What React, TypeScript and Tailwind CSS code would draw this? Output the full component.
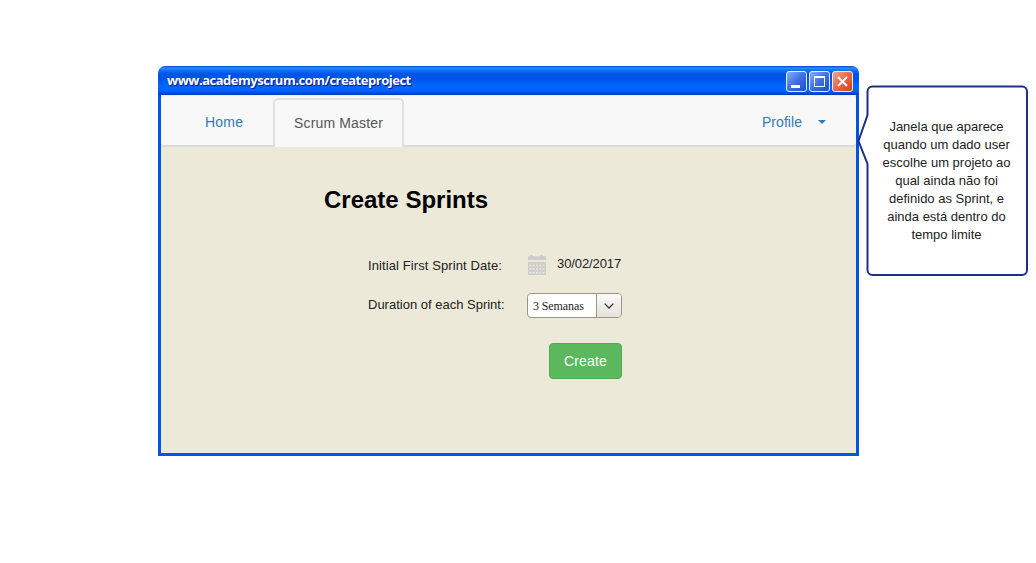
import React from "react";

function TitleButton({ kind }: { kind: "min" | "max" | "close" }) {
  const close = kind === "close";
  return (
    <button aria-label={kind} className="h-[21px] w-[21px]">
      <svg width="21" height="21" viewBox="0 0 21 21" className="block">
        <defs>
          <linearGradient id={`fill-${kind}`} x1="0" y1="0" x2="1" y2="1">
            <stop offset="0" stopColor={close ? "#f3a58f" : "#8fb0f8"} />
            <stop offset="0.5" stopColor={close ? "#e5694a" : "#3f6fe4"} />
            <stop offset="1" stopColor={close ? "#d63d10" : "#1b4dd0"} />
          </linearGradient>
        </defs>
        <rect x="0.5" y="0.5" width="20" height="20" rx="2.5" fill={`url(#fill-${kind})`} stroke="#e3ebff" />
        {kind === "min" && <rect x="5" y="14" width="9" height="3" fill="#fff" />}
        {kind === "max" && (
          <path fill="#fff" fillRule="evenodd" d="M5 5h11v11H5zM6 7v8h9V7z" />
        )}
        {close && <path d="M6 6l9 9M15 6l-9 9" stroke="#fff" strokeWidth="2" />}
      </svg>
    </button>
  );
}

function CalendarIcon() {
  return (
    <svg width="20" height="21" viewBox="0 0 20 21" className="block">
      <path fill="#ccc" d="M1 3q0-.8.800-.800H3Q3 .800 4.500.800T6 2.200h7Q13 .800 14.500.800T16 2.200h2.200q.800 0 .800.800V6H1z" />
      <path fill="#ccc" d="M1 8h18v12q0 1-1 1H2q-1 0-1-1z" />
      <g fill="#ece9d8">
        {[10.700, 14.200, 17.800].map((y) =>
          [2.400, 5.700, 9.000, 12.300, 15.600].map((x) => (
            <rect key={`${x}-${y}`} x={x} y={y} width="1.900" height="1.700" />
          ))
        )}
      </g>
    </svg>
  );
}

function Window() {
  return (
    <section className="mt-[66px] ml-[158px] flex h-[390px] w-[701px] shrink-0 flex-col">
      <header className="flex h-[29px] shrink-0 items-center rounded-t-[7px] bg-[linear-gradient(to_bottom,#0543c4_0px,#2f8bff_2px,#1672fa_4px,#0054e3_8px,#0055e8_13px,#0066ff_20px,#0066ff_24px,#0050dc_27px,#0038b4_29px)] pr-[6px] pl-[9px]">
        <h1 className="-mt-[2px] w-[260px] font-['Open_Sans','Noto_Sans',sans-serif] text-[13px] leading-[20px] font-bold tracking-[-0.48px] whitespace-nowrap text-white [text-shadow:1px_1px_1px_#0f1089]">
          www.academyscrum.com/createproject
        </h1>
        <div className="mt-[2px] ml-auto flex gap-[2px]">
          <TitleButton kind="min" />
          <TitleButton kind="max" />
          <TitleButton kind="close" />
        </div>
      </header>
      <div className="flex grow flex-col border-x-[3px] border-b-[3px] border-[#0055e5] bg-[#ece9d8]">
        <nav className="flex h-[52px] shrink-0 rounded border-t border-b-2 border-t-[#efefef] border-b-[#dadada] bg-[#f8f8f8] text-[14px] leading-[20px] text-[#337ab7]">
          <a className="mt-[16px] ml-[44px] w-[68px] tracking-[0.2px]">Home</a>
          <div className="mt-[2px] h-[49px] w-[131px] rounded-t-[5px] border-2 border-b-0 border-[#e0e0e0] bg-[#f8f8f8] pt-[13px] text-center tracking-[0.15px] text-[#555]">
            Scrum Master
          </div>
          <a className="mt-[16px] ml-auto flex pr-[30px]">
            <span className="tracking-[0.05px]">Profile</span>
            <svg width="8" height="4" viewBox="0 0 8 4" className="mt-[8px] ml-[16px]">
              <path d="M0 0h8L4 4z" fill="#337ab7" />
            </svg>
          </a>
        </nav>
        <main className="pl-[163px] text-[13px] leading-[20px] text-[#222]">
          <h2 className="mt-[38px] text-[24px] leading-[30px] font-bold text-black">Create Sprints</h2>
          <div className="mt-[37px] ml-[44px] grid w-[254px] grid-cols-[159px_95px]">
            <label className="mt-[4px] tracking-[0.1px] whitespace-nowrap">Initial First Sprint Date:</label>
            <div className="flex h-[41px]">
              <div className="mt-[2px]"><CalendarIcon /></div>
              <span className="mt-[2px] ml-[10px] tracking-[-0.1px]">30/02/2017</span>
            </div>
            <label className="mt-[2px] whitespace-nowrap">Duration of each Sprint:</label>
            <div className="flex h-[25px] w-[95px] overflow-hidden rounded-[4px] border border-[#9d9485] bg-white">
              <span className="w-[68px] pl-[5px] pt-[2px] font-['Liberation_Serif',serif] text-[12px] tracking-[-0.1px] text-[#222]">3 Semanas</span>
              <div className="flex grow items-center justify-center border-l border-[#9d9485] bg-linear-to-b from-[#fbfbfa] to-[#e5e1da]">
                <svg width="10" height="6" viewBox="0 0 10 6">
                  <path d="M.7.600L5 5l4.300-4.400" fill="none" stroke="#333" strokeWidth="1.300" />
                </svg>
              </div>
            </div>
            <button className="col-start-2 mt-[25px] h-[36px] w-[73px] justify-self-end rounded-[4px] border border-[#4cae4c] bg-[#5cb85c] text-[14px] tracking-[0.15px] text-white">
              Create
            </button>
          </div>
        </main>
      </div>
    </section>
  );
}

function Callout() {
  return (
    <aside className="relative mt-[85px] -ml-[2px] h-[192px] w-[171px] shrink-0">
      <svg width="171" height="192" viewBox="0 0 171 192" className="absolute inset-0">
        <path
          d="M15.500 1.500H165a5 5 0 0 1 5 5V185a5 5 0 0 1-5 5H15.500a5 5 0 0 1-5-5V79L1.500 56l9-26V6.500a5 5 0 0 1 5-5z"
          fill="#fff"
          stroke="#1b3284"
          strokeWidth="2"
        />
      </svg>
      <p className="relative pt-[33px] pl-[8px] text-center text-[13px] leading-[18px] text-[#222]">
        Janela que aparece<br />quando um dado user<br />escolhe um projeto ao<br />qual ainda não foi<br />
        definido as Sprint, e<br />ainda está dentro do<br />tempo limite
      </p>
    </aside>
  );
}

export default function App() {
  return (
    <div className="flex h-[563px] w-[1036px] overflow-hidden bg-white font-['Liberation_Sans',Arial,sans-serif]">
      <Window />
      <Callout />
    </div>
  );
}
